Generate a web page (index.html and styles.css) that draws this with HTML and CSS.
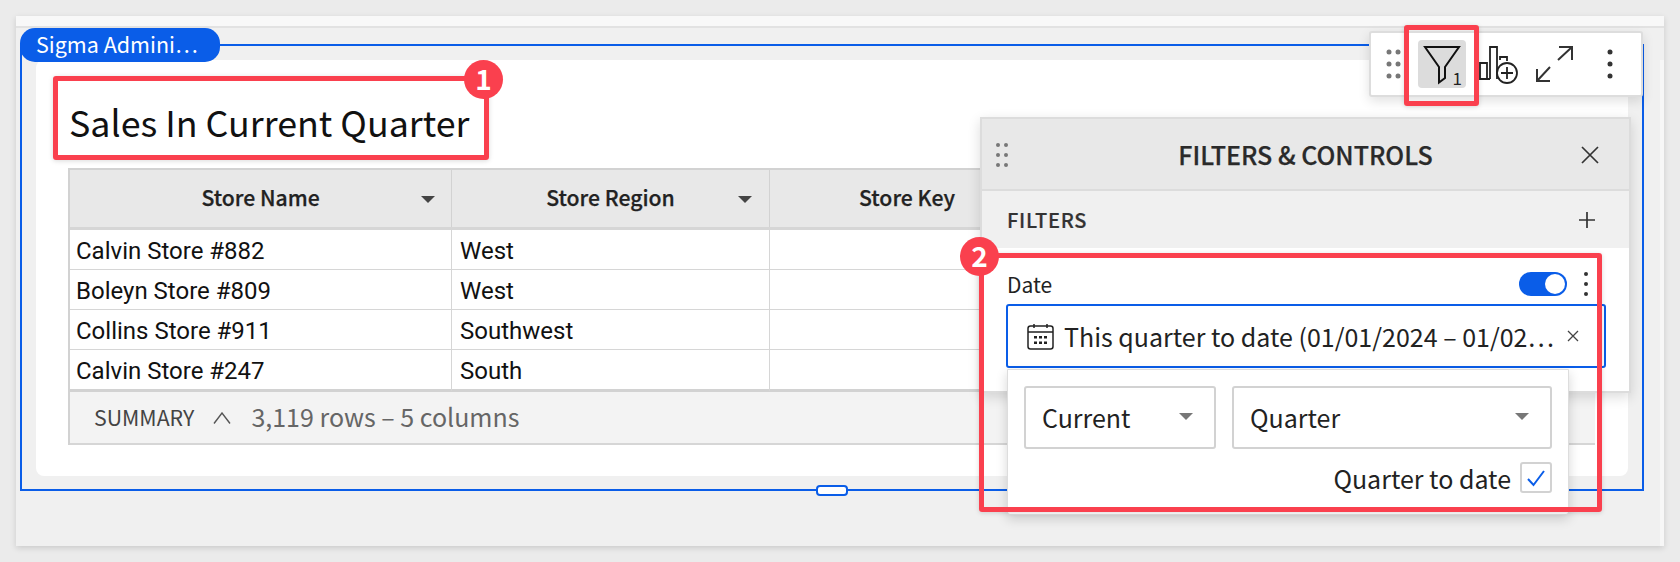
FILE: index.html
```html
<!DOCTYPE html>
<html lang="en">
<head>
<meta charset="utf-8">
<title>Sales In Current Quarter</title>
<link rel="stylesheet" href="styles.css">
</head>
<body>
<main class="sheet">
  <div class="strip"></div>
  <div class="edge"></div>
  <section class="frame">
    <div class="pill">Sigma Admini…</div>
    <div class="card">
      <h1 class="title">Sales In Current Quarter</h1>
      <div class="table">
        <div class="row head">
          <div class="hcell first">Store Name<span class="caret dark caret-a"></span></div>
          <div class="hcell second">Store Region<span class="caret dark caret-b"></span></div>
          <div class="hcell third">Store Key</div>
        </div>
        <div class="row"><div class="cell">Calvin Store #882</div><div class="cell">West</div><div class="cell"></div></div>
        <div class="row"><div class="cell">Boleyn Store #809</div><div class="cell">West</div><div class="cell"></div></div>
        <div class="row"><div class="cell">Collins Store #911</div><div class="cell">Southwest</div><div class="cell"></div></div>
        <div class="row last"><div class="cell">Calvin Store #247</div><div class="cell">South</div><div class="cell"></div></div>
        <div class="summary">
          <span class="sum-label">SUMMARY</span>
          <svg class="chev" width="18" height="12" viewBox="0 0 18 12"><path d="M1 11.5 9 1l8 10.5" fill="none" stroke="#555" stroke-width="1.4"/></svg>
          <span class="sum-count">3,119 rows – 5 columns</span>
        </div>
      </div>
    </div>
    <div class="handle"></div>
  </section>

  <div class="toolbar">
    <svg class="tool-drag" width="18" height="34" viewBox="0 0 18 34"><g fill="#777"><circle cx="4" cy="5" r="2.5"/><circle cx="13" cy="5" r="2.5"/><circle cx="4" cy="17" r="2.5"/><circle cx="13" cy="17" r="2.5"/><circle cx="4" cy="29" r="2.5"/><circle cx="13" cy="29" r="2.5"/></g></svg>
    <div class="filter-btn">
      <svg width="48" height="48" viewBox="0 0 48 48"><path d="M7 7h34L27 27v11l-6 4.500V27z" fill="none" stroke="#111" stroke-width="2"/></svg>
      <span class="filter-count">1</span>
    </div>
    <svg class="tool-chart" width="40" height="40" viewBox="0 0 40 40"><g fill="none" stroke="#222" stroke-width="1.800"><path d="M1 34V18h7v16zM8 34h3M11 34V2h7v32M21 15v-3h7v4"/><circle cx="28" cy="28" r="10" fill="#fff"/><path d="M28 22v12M22 28h12"/></g></svg>
    <svg class="tool-expand" width="38" height="38" viewBox="0 0 38 38"><g fill="none" stroke="#333" stroke-width="2"><path d="M2 36 15 22M2 24v12h13M23 15 37 2M24 2h13v13"/></g></svg>
    <svg class="tool-kebab" width="6" height="30" viewBox="0 0 6 30"><g fill="#333"><circle cx="3" cy="3" r="2.500"/><circle cx="3" cy="15" r="2.500"/><circle cx="3" cy="27" r="2.500"/></g></svg>
  </div>

  <aside class="panel">
    <header class="panel-head">
      <svg class="panel-drag" width="14" height="26" viewBox="0 0 14 26"><g fill="#777"><circle cx="3" cy="3" r="2"/><circle cx="11" cy="3" r="2"/><circle cx="3" cy="13" r="2"/><circle cx="11" cy="13" r="2"/><circle cx="3" cy="23" r="2"/><circle cx="11" cy="23" r="2"/></g></svg>
      <span class="panel-title">FILTERS &amp; CONTROLS</span>
      <svg class="panel-close" width="18" height="18" viewBox="0 0 18 18"><path d="M1 1l16 16M17 1 1 17" stroke="#333" stroke-width="1.700" fill="none"/></svg>
    </header>
    <div class="panel-section">
      <span class="section-label">FILTERS</span>
      <svg width="18" height="18" viewBox="0 0 18 18"><path d="M9 1v16M1 9h16" stroke="#333" stroke-width="1.700" fill="none"/></svg>
    </div>
    <div class="filter-body">
      <div class="filter-top">
        <span class="filter-name">Date</span>
        <span class="toggle"><span class="knob"></span></span>
        <svg class="filter-kebab" width="6" height="26" viewBox="0 0 6 26"><g fill="#333"><circle cx="3" cy="3" r="2"/><circle cx="3" cy="13" r="2"/><circle cx="3" cy="23" r="2"/></g></svg>
      </div>
      <div class="date-input">
        <svg class="cal" width="27" height="27" viewBox="0 0 27 27"><g fill="none" stroke="#222" stroke-width="1.500"><rect x="1" y="3" width="25" height="23" rx="2.500"/><path d="M1 9h25M7 1v4M20 1v4"/></g><g fill="#222"><rect x="7" y="13" width="3" height="2.500"/><rect x="12" y="13" width="3" height="2.500"/><rect x="17" y="13" width="3" height="2.500"/><rect x="7" y="18.500" width="3" height="2.500"/><rect x="12" y="18.500" width="3" height="2.500"/><rect x="17" y="18.500" width="3" height="2.500"/></g></svg>
        <span class="date-text">This quarter to date (01/01/2024 – 01/02…</span>
        <svg class="date-x" width="12" height="12" viewBox="0 0 12 12"><path d="M1 1l10 10M11 1 1 11" stroke="#444" stroke-width="1.300" fill="none"/></svg>
      </div>
    </div>
    <div class="popover">
      <div class="selects">
        <div class="select sel-a"><span>Current</span><span class="caret grey"></span></div>
        <div class="select sel-b"><span>Quarter</span><span class="caret grey"></span></div>
      </div>
      <div class="to-date">
        <span>Quarter to date</span>
        <span class="check"><svg width="20" height="18" viewBox="0 0 20 18"><path d="M2 10l5.500 6L18 2" fill="none" stroke="#0a5de8" stroke-width="2"/></svg></span>
      </div>
    </div>
  </aside>

  <div class="mark mark-title"></div>
  <div class="mark mark-filter"></div>
  <div class="mark mark-date"></div>
  <div class="badge badge-one">1</div>
  <div class="badge badge-two">2</div>
</main>
</body>
</html>
```
FILE: styles.css
```css
* { box-sizing: border-box; }
html, body { margin: 0; height: 562px; overflow: hidden; background: #ebebeb; }
body { font-family: "Noto Sans CJK JP", "Noto Sans", sans-serif; color: #111; padding: 16px 16px 0 16px; }

.sheet { position: relative; height: 530px; background: #f0f0f0; box-shadow: 0 2px 6px rgba(0,0,0,.14); }
.strip { height: 12px; background: #f8f8f8; border-bottom: 2px solid #e2e2e2; }
.edge { position: absolute; right: 0; top: 44px; bottom: 0; width: 4px; background: #f7f7f7; }

.frame { position: relative; margin: 16px 0 0 4px; width: 1624px; height: 447px; border: 2px solid #0a5de8; padding: 14px 14px 13px 14px; }
.pill { position: absolute; left: -2px; top: -18px; width: 200px; height: 34px; background: #0a5de8; color: #fff; border-radius: 15px; font-size: 21.5px; line-height: 31px; padding-left: 16px; }
.card { height: 100%; background: #fff; border-radius: 8px; padding: 0 33px 0 32px; }
.title { margin: 0; height: 108px; padding: 33px 0 0 1px; font-weight: 400; font-size: 35.8px; line-height: 56px; color: #111; white-space: nowrap; }

.table { border-left: 2px solid #d2d2d2; border-top: 2px solid #d2d2d2; }
.row { display: grid; grid-template-columns: 382px 318px 1fr; height: 40px; border-bottom: 1px solid #d6d6d6; }
.row.head { height: 60px; background: #e8e8e8; border-bottom: 3px solid #d6d6d6; }
.row.last { height: 42px; border-bottom: 3px solid #d2d2d2; }
.cell { font-family: Roboto, sans-serif; font-size: 24px; line-height: 39px; padding: 2px 0 0 6px; border-right: 1px solid #d6d6d6; white-space: nowrap; }
.cell:nth-child(2) { padding-left: 8px; }
.hcell { position: relative; display: flex; justify-content: center; align-items: center; font-weight: 500; font-size: 21.2px; -webkit-text-stroke: .25px #222; padding-bottom: 4px; border-right: 1px solid #d2d2d2; color: #222; }
.hcell.third { width: 274px; border-right: 0; }
.caret { display: inline-block; width: 0; height: 0; border-left: 7px solid transparent; border-right: 7px solid transparent; }
.caret.dark { border-top: 7px solid #444; }
.caret.grey { border-top: 7px solid #777; }
.caret-a { position: absolute; left: 351px; top: 26px; }
.caret-b { position: absolute; left: 286px; top: 26px; }
.summary { display: flex; align-items: center; height: 53px; background: #f3f3f3; border-bottom: 2px solid #d6d6d6; padding: 0 0 3px 24px; }
.sum-label { font-size: 21.3px; color: #444; }
.chev { margin: 3px 0 0 19px; }
.sum-count { margin-left: 20px; font-size: 25px; color: #666; }

.handle { position: absolute; left: 794px; bottom: -7px; width: 32px; height: 11px; background: #fff; border: 2px solid #0a5de8; border-radius: 4px; }

.toolbar { position: absolute; left: 1353px; top: 15px; width: 274px; height: 66px; background: #fff; border: 2px solid #ddd; border-radius: 3px; box-shadow: 0 4px 12px rgba(0,0,0,.12); display: flex; align-items: center; padding-left: 14px; }
.filter-btn { position: relative; width: 48px; height: 48px; margin-left: 15px; background: #dcdcdc; border-radius: 4px; }
.filter-btn svg { display: block; }
.filter-count { position: absolute; right: 4px; bottom: 0; font-size: 17px; line-height: 20px; color: #222; }
.tool-chart { margin: 2px 0 0 13px; }
.tool-expand { margin-left: 16px; }
.tool-kebab { margin-left: 34px; }

.panel { position: absolute; left: 964px; top: 101px; width: 651px; height: 276px; background: #fff; border: 2px solid #dcdcdc; border-top: 0; box-shadow: 0 4px 12px rgba(0,0,0,.14); }
.panel-head { position: relative; display: flex; align-items: center; justify-content: center; height: 74px; background: #e8e8e8; border-top: 2px solid #dcdcdc; border-bottom: 2px solid #dcdcdc; }
.panel-title { font-size: 25px; font-weight: 500; -webkit-text-stroke: .25px #2a2a2a; color: #2a2a2a; }
.panel-drag { position: absolute; left: 13px; top: 23px; }
.panel-close { position: absolute; right: 30px; top: 27px; }
.panel-section { display: flex; align-items: center; justify-content: space-between; height: 57px; background: #f0f0f0; padding: 0 33px 0 25px; }
.section-label { font-size: 20px; font-weight: 500; -webkit-text-stroke: .2px #333; color: #333; letter-spacing: .7px; }
.filter-body { padding: 24px 0 0 24px; }
.filter-top { display: flex; align-items: center; height: 32px; position: relative; }
.filter-name { font-size: 21px; line-height: 24px; flex: 1; color: #222; margin: 0 0 8px 1px; }
.toggle { width: 48px; height: 24px; margin: 0 16px 8px 0; border-radius: 12px; background: #0a5de8; padding: 2px; display: flex; justify-content: flex-end; }
.knob { width: 20px; height: 20px; border-radius: 50%; background: #fff; }
.filter-kebab { margin: 0 40px 8px 0; }
.date-input { display: flex; align-items: center; width: 600px; height: 64px; background: #fff; border: 2px solid #0a5de8; border-radius: 3px; padding-left: 19px; }
.date-text { font-size: 25px; line-height: 56px; margin-left: 10px; white-space: nowrap; color: #222; }
.date-x { margin-left: 13px; }

.popover { position: absolute; left: 25px; top: 252px; width: 562px; height: 146px; background: #fff; border: 1px solid #ddd; border-radius: 0 0 3px 3px; box-shadow: 0 4px 12px rgba(0,0,0,.16); padding: 16px 16px 0; }
.selects { display: flex; gap: 16px; }
.select { display: flex; align-items: center; justify-content: space-between; height: 63px; border: 2px solid #d2d2d2; border-radius: 3px; font-size: 25px; color: #222; padding: 0 21px 2px 16px; }
.sel-a { width: 192px; }
.sel-b { width: 320px; }
.to-date { display: flex; justify-content: flex-end; align-items: center; gap: 9px; height: 33px; margin-top: 12px; font-size: 25px; color: #222; }
.check { display: flex; align-items: center; justify-content: center; width: 32px; height: 31px; border: 2px solid #d2d2d2; border-radius: 3px; }

.mark { position: absolute; border: 5px solid #fa404e; border-radius: 3px; box-shadow: 0 1px 5px rgba(0,0,0,.15); }
.mark-title { left: 37px; top: 60px; width: 436px; height: 84px; }
.mark-filter { left: 1388px; top: 9px; width: 75px; height: 81px; }
.mark-date { left: 963px; top: 237px; width: 623px; height: 259px; }
.badge { position: absolute; width: 39px; height: 39px; border-radius: 50%; background: #fa404e; color: #fff; font-size: 28px; font-weight: 700; line-height: 37px; text-align: center; }
.badge-one { left: 448px; top: 44px; }
.badge-two { left: 944px; top: 221px; }
```
